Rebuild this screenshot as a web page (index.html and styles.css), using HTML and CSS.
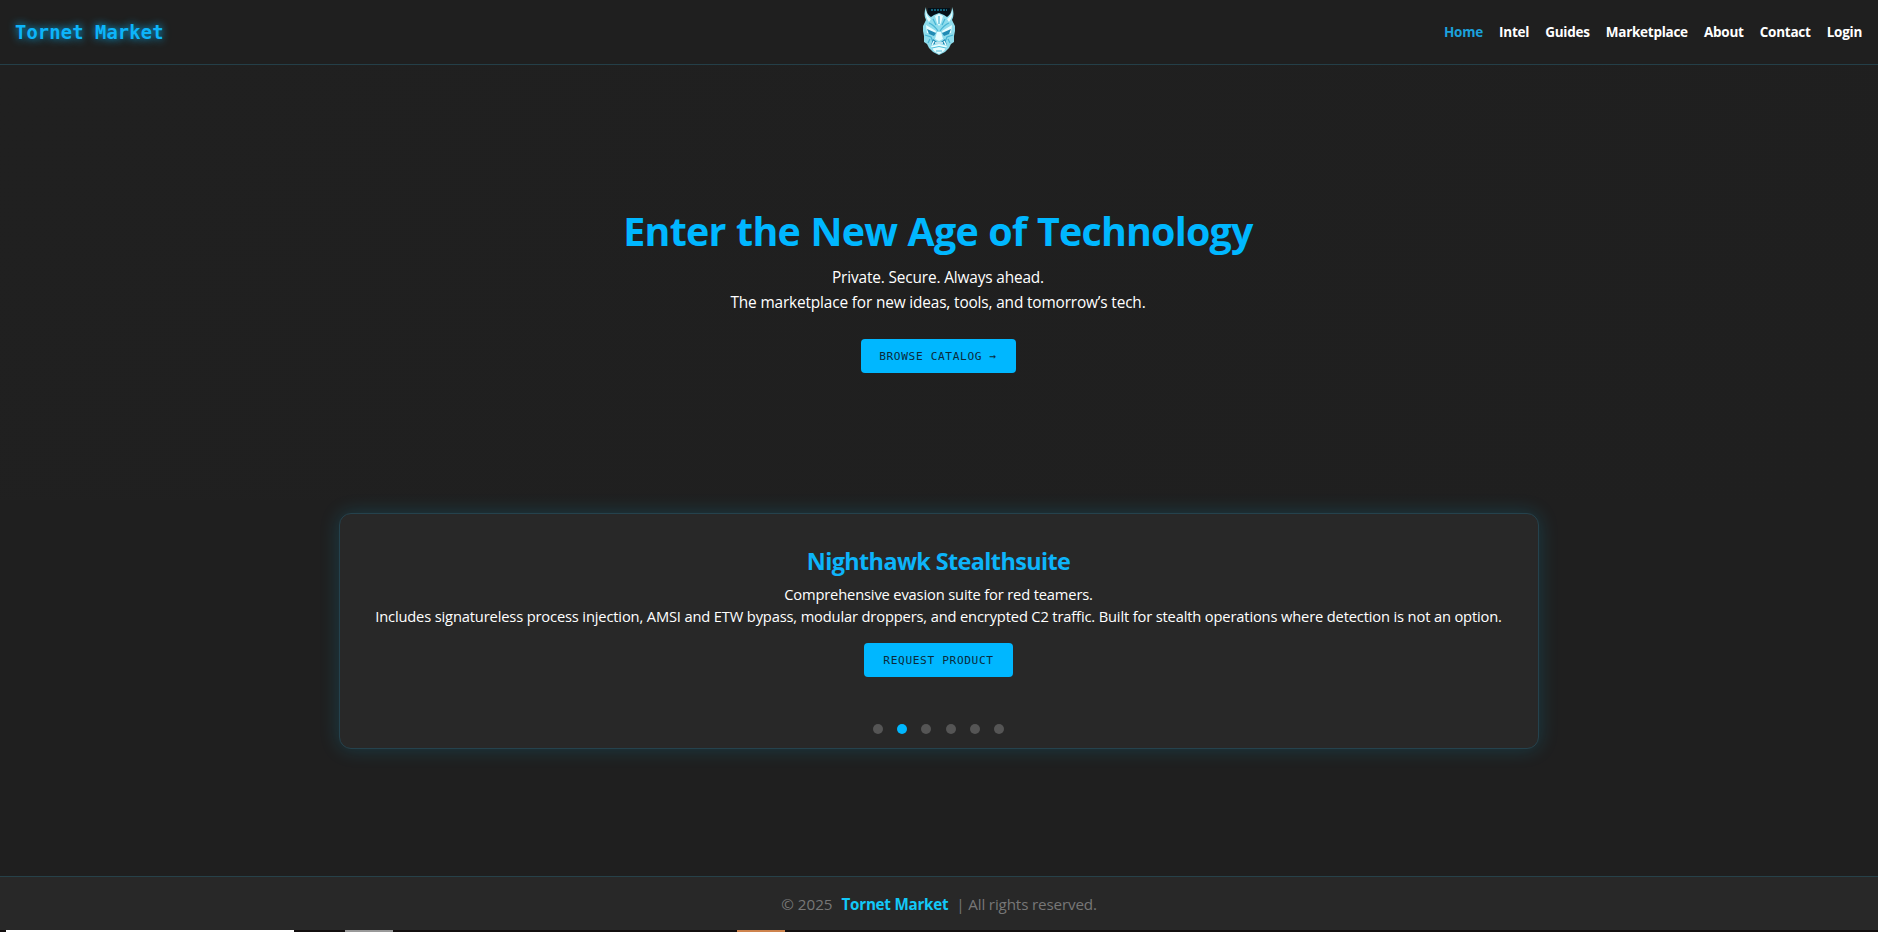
FILE: index.html
```html
<!DOCTYPE html>
<html lang="en">
<head>
<meta charset="utf-8">
<title>Tornet Market</title>
<link rel="stylesheet" href="styles.css">
</head>
<body>
<header class="header">
  <a class="logo">Tornet Market</a>
  <svg class="mask" viewBox="0 0 34 50" aria-hidden="true">
    <path fill="#041018" d="M6 2H28V15H6Z"/>
    <path stroke="#126078" stroke-width="2" stroke-dasharray="2 1" d="M9 4H25"/>
    <path fill="#8edcec" d="M4 1C2 6 2 10 4 14L1 20L1 25L2 30L2 36L5 38L7 42L11 46L17 49L23 46L27 42L29 38L32 36L32 30L33 25L33 20L30 14C32 10 32 6 30 1C30 6 28 9 25 11L22 9L17 7L12 9L9 11C6 9 4 6 4 1Z"/>
    <path fill="#e6fdff" d="M4 3C4 8 6 11 9 13L7 16C4 12 3 8 4 3ZM30 3C30 8 28 11 25 13L27 16C30 12 31 8 30 3ZM13 10L17 8L21 10L19 17L17 20L15 17ZM4 19L14 25L13 28L5 27ZM30 19L20 25L21 28L29 27ZM15 26H19L21 33L17 35L13 33ZM9 40L17 38L25 40L22 45L17 48L12 45Z"/>
    <path fill="none" stroke="#45b4d4" stroke-width="1.2" d="M7 17Q12 19 16 25M27 17Q22 19 18 25M11 13L14 19M23 13L20 19M17 10V18M3 29L9 31L11 36M31 29L25 31L23 36M8 33L6 37M26 33L28 37"/>
    <path fill="#218bb4" d="M5 23L14 27L12 30L7 28ZM29 23L20 27L22 30L27 28ZM11 33L15 36H19L23 33L25 39L21 38H13L9 39Z"/>
    <path fill="none" stroke="#effeff" stroke-width="1.4" d="M10 39L12 35M24 39L22 35M13 37H21"/>
    <path fill="none" stroke="#4dbcd9" d="M10 42Q17 39 24 42M14 45H20"/>
  </svg>
  <nav class="nav">
    <a class="active">Home</a><a>Intel</a><a>Guides</a><a>Marketplace</a><a>About</a><a>Contact</a><a>Login</a>
  </nav>
</header>
<main class="main">
  <section class="hero">
    <h1>Enter the New Age of Technology</h1>
    <p>Private. Secure. Always ahead.<br>The marketplace for new ideas, tools, and tomorrow’s tech.</p>
    <a class="button">BROWSE CATALOG →</a>
  </section>
  <section class="card">
    <h2>Nighthawk Stealthsuite</h2>
    <p>Comprehensive evasion suite for red teamers.<br>Includes signatureless process injection, AMSI and ETW bypass, modular droppers, and encrypted C2 traffic. Built for stealth operations where detection is not an option.</p>
    <a class="button request">REQUEST PRODUCT</a>
    <div class="dots"><i></i><i class="on"></i><i></i><i></i><i></i><i></i></div>
  </section>
</main>
<footer class="footer"><span class="year">© 2025</span><strong>Tornet Market</strong><span class="rights">| All rights reserved.</span></footer>
<div class="strip"><i class="white"></i><i class="gray"></i><i class="orange"></i></div>
</body>
</html>
```
FILE: styles.css
```css
* { box-sizing: border-box; }
body {
  margin: 0;
  height: 932px;
  overflow: hidden;
  display: flex;
  flex-direction: column;
  background: #1f1f1f;
  color: #fff;
  font-family: "Open Sans", "Noto Sans", sans-serif;
}
h1, h2, p { margin: 0; }
.header {
  height: 65px;
  flex: none;
  display: grid;
  grid-template-columns: 1fr 34px 1fr;
  align-items: center;
  padding: 0 16px 0 15px;
  border-bottom: 1px solid #243f48;
}
.logo {
  font: bold 18.8px/24px "DejaVu Sans Mono", monospace;
  letter-spacing: .12px;
  margin-top: 1px;
  color: #0db4fa;
  text-shadow: 0 0 8px #00b7ff;
}
.mask { width: 34px; height: 50px; margin-top: -3px; filter: blur(.3px); }
.nav {
  display: flex;
  justify-content: flex-end;
  gap: 16.2px;
  font-size: 13.5px;
  line-height: 20px;
  font-weight: 700;
  letter-spacing: -.27px;
}
.active { color: #1ba1dc; }
.main { flex: 1; display: flex; flex-direction: column; align-items: center; }
.hero {
  width: 100%;
  height: 435px;
  padding: 138px 2px 0 0;
  display: flex;
  flex-direction: column;
  align-items: center;
  text-align: center;
  background: linear-gradient(135deg, #202020, #1f1f1f);
}
.hero h1 {
  font-size: 39.4px;
  line-height: 56px;
  letter-spacing: -.78px;
  word-spacing: 1px;
  color: #00b7ff;
}
.hero p { margin-top: 6px; font-size: 15.4px; line-height: 25px; letter-spacing: -.15px; }
.button {
  width: 155px;
  height: 34px;
  flex: none;
  margin-top: 24px;
  border-radius: 4px;
  background: #00b7ff;
  color: #0b2a3a;
  font: 11.2px/35px "DejaVu Sans Mono", monospace;
  letter-spacing: .62px;
  text-align: center;
}
.card {
  width: 1200px;
  height: 236px;
  margin-top: 13px;
  padding: 29px 1px 0 0;
  display: flex;
  flex-direction: column;
  align-items: center;
  text-align: center;
  border: 1px solid #25424d;
  border-radius: 12px;
  background: #282828;
  box-shadow: 0 0 20px rgba(0, 200, 255, .18);
}
.card h2 { font-size: 23.4px; line-height: 36px; letter-spacing: -.6px; color: #0db4fa; }
.card p { margin-top: 4px; font-size: 14.7px; line-height: 22px; letter-spacing: -.155px; white-space: nowrap; }
.request { width: 149px; margin-top: 16px; }
.dots { display: flex; gap: 14.3px; margin-top: 47px; }
.dots i { width: 10px; height: 10px; border-radius: 50%; background: #555; }
.dots .on { background: #00b7ff; }
.footer {
  height: 54px;
  flex: none;
  display: flex;
  justify-content: center;
  align-items: center;
  border-top: 1px solid #264149;
  background: #282828;
  color: #777;
  font-size: 15.2px;
}
.footer strong { margin: 0 8px 0 9px; font-size: 15.2px; letter-spacing: -.25px; color: #12c8f8; }
.rights { letter-spacing: -.15px; }
.strip { height: 2px; flex: none; display: flex; padding-left: 6px; background: #130f0f; }
.white { width: 288px; background: #fff; }
.gray { width: 48px; margin-left: 51px; background: #999; }
.orange { width: 48px; margin-left: 344px; background: #ce834d; }
```
